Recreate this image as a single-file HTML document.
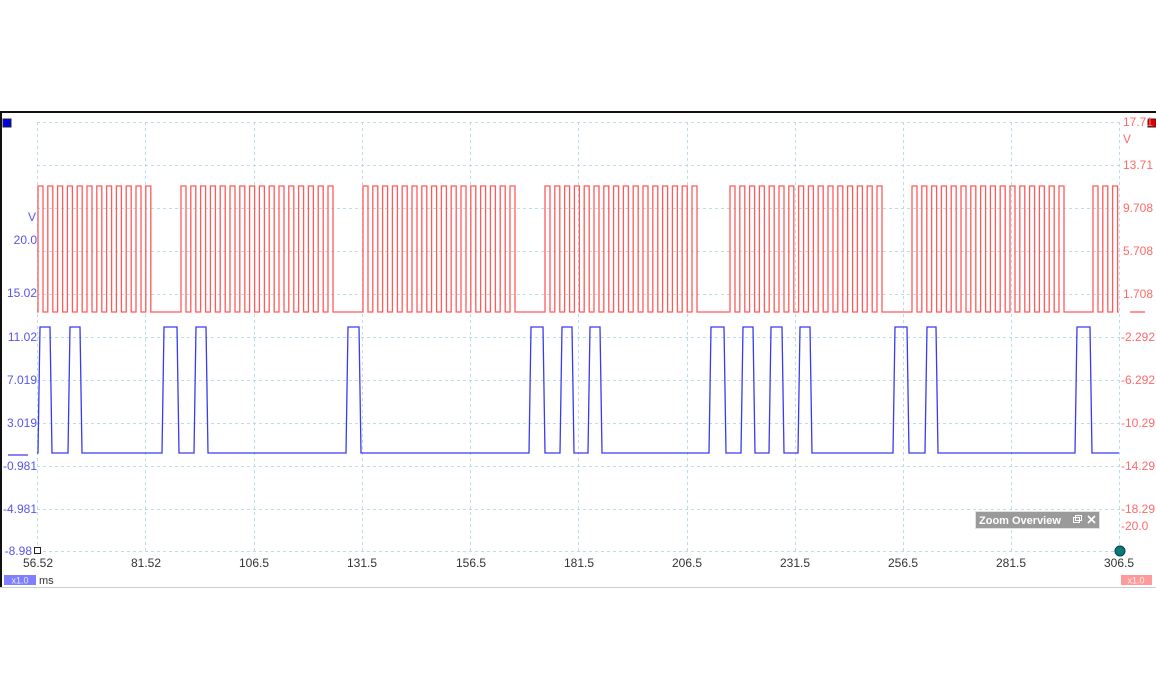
<!DOCTYPE html>
<html><head><style>
body{margin:0;width:1156px;height:700px;background:#fff;overflow:hidden;font-family:"Liberation Sans",sans-serif}
svg{position:absolute;left:0;top:0}
</style></head><body>
<svg width="1156" height="700" xmlns="http://www.w3.org/2000/svg" font-family="Liberation Sans, sans-serif">
<rect x="0" y="0" width="1156" height="700" fill="#fff"/>
<line x1="0" y1="112" x2="1156" y2="112" stroke="#111" stroke-width="2"/>
<line x1="1" y1="111" x2="1" y2="588" stroke="#111" stroke-width="2"/>
<line x1="0" y1="587.5" x2="1156" y2="587.5" stroke="#ccc"/>
<g stroke="#bcdde8" stroke-width="1" stroke-dasharray="3,3">
<line x1="37.5" y1="122" x2="37.5" y2="551"/><line x1="145.5" y1="122" x2="145.5" y2="551"/>
<line x1="254.5" y1="122" x2="254.5" y2="551"/><line x1="362.5" y1="122" x2="362.5" y2="551"/>
<line x1="470.5" y1="122" x2="470.5" y2="551"/><line x1="578.5" y1="122" x2="578.5" y2="551"/>
<line x1="687.5" y1="122" x2="687.5" y2="551"/><line x1="795.5" y1="122" x2="795.5" y2="551"/>
<line x1="903.5" y1="122" x2="903.5" y2="551"/><line x1="1011.5" y1="122" x2="1011.5" y2="551"/>
<line x1="1119.5" y1="122" x2="1119.5" y2="551"/>
<line x1="37" y1="122.5" x2="1120" y2="122.5"/><line x1="37" y1="165.5" x2="1120" y2="165.5"/>
<line x1="37" y1="208.5" x2="1120" y2="208.5"/><line x1="37" y1="251.5" x2="1120" y2="251.5"/>
<line x1="37" y1="294.5" x2="1120" y2="294.5"/><line x1="37" y1="337.5" x2="1120" y2="337.5"/>
<line x1="37" y1="380.5" x2="1120" y2="380.5"/><line x1="37" y1="423.5" x2="1120" y2="423.5"/>
<line x1="37" y1="466.5" x2="1120" y2="466.5"/><line x1="37" y1="509.5" x2="1120" y2="509.5"/>
<line x1="37" y1="551.5" x2="1120" y2="551.5"/>
</g>
<path fill="none" stroke="#ff5a5a" stroke-width="1.3" d="M37 312H38
v-126h5v126h4.8v-126h5v126h4.8v-126h5v126h4.8v-126h5v126h4.8v-126h5v126h4.8v-126h5v126h4.8v-126h5v126h4.8v-126h5v126h4.8v-126h5v126h4.8v-126h5v126h4.8v-126h5v126h4.8v-126h5v126
H181 v-126h5v126h4.8v-126h5v126h4.8v-126h5v126h4.8v-126h5v126h4.8v-126h5v126h4.8v-126h5v126h4.8v-126h5v126h4.8v-126h5v126h4.8v-126h5v126h4.8v-126h5v126h4.8v-126h5v126h4.8v-126h5v126h4.8v-126h5v126h4.8v-126h5v126h4.8v-126h5v126h4.8v-126h5v126
H363 v-126h5v126h4.8v-126h5v126h4.8v-126h5v126h4.8v-126h5v126h4.8v-126h5v126h4.8v-126h5v126h4.8v-126h5v126h4.8v-126h5v126h4.8v-126h5v126h4.8v-126h5v126h4.8v-126h5v126h4.8v-126h5v126h4.8v-126h5v126h4.8v-126h5v126h4.8v-126h5v126h4.8v-126h5v126
H545 v-126h5v126h4.8v-126h5v126h4.8v-126h5v126h4.8v-126h5v126h4.8v-126h5v126h4.8v-126h5v126h4.8v-126h5v126h4.8v-126h5v126h4.8v-126h5v126h4.8v-126h5v126h4.8v-126h5v126h4.8v-126h5v126h4.8v-126h5v126h4.8v-126h5v126h4.8v-126h5v126h4.8v-126h5v126
H730 v-126h5v126h4.8v-126h5v126h4.8v-126h5v126h4.8v-126h5v126h4.8v-126h5v126h4.8v-126h5v126h4.8v-126h5v126h4.8v-126h5v126h4.8v-126h5v126h4.8v-126h5v126h4.8v-126h5v126h4.8v-126h5v126h4.8v-126h5v126h4.8v-126h5v126h4.8v-126h5v126h4.8v-126h5v126
H912 v-126h5v126h4.8v-126h5v126h4.8v-126h5v126h4.8v-126h5v126h4.8v-126h5v126h4.8v-126h5v126h4.8v-126h5v126h4.8v-126h5v126h4.8v-126h5v126h4.8v-126h5v126h4.8v-126h5v126h4.8v-126h5v126h4.8v-126h5v126h4.8v-126h5v126h4.8v-126h5v126h4.8v-126h5v126
H1093 v-126h5v126h4.8v-126h5v126h4.8v-126h5v126H1119"/>
<line x1="1130" y1="312" x2="1145" y2="312" stroke="#ff5a5a" stroke-width="1.3"/>
<path fill="none" stroke="#3a3af0" stroke-width="1.3" d="M37 453H38L40 327H50L52 453H68L70 327H80L82 453H162L164 327H177L179 453H194L196 327H206L208 453H346L348 327H359L361 453H529L531 327H543L545 453H560L562 327H572L574 453H588L590 327H600L602 453H709L711 327H724L726 453H741L743 327H753L755 453H769L771 327H782L784 453H798L800 327H810L812 453H893L895 327H907L909 453H925L927 327H936L938 453H1075L1077 327H1090L1092 453H1119"/>
<line x1="8" y1="455" x2="28" y2="455" stroke="#3a3af0" stroke-width="1.3"/>
<rect x="3" y="119" width="8" height="8" fill="#0000e0" stroke="#223"/>
<rect x="1148" y="119" width="8" height="8" fill="#e00000" stroke="#322"/>
<rect x="34.5" y="547.5" width="6" height="6" fill="#fff" stroke="#222"/>
<circle cx="1120" cy="551" r="5" fill="#0a7a78" stroke="#044"/>
<g fill="#5555ee" font-size="12" text-anchor="end">
<text x="36" y="221">V</text><text x="37" y="244">20.0</text><text x="37" y="297">15.02</text>
<text x="37" y="341">11.02</text><text x="37" y="384">7.019</text><text x="37" y="427">3.019</text>
<text x="37" y="470">-0.981</text><text x="37" y="513">-4.981</text><text x="32" y="555">-8.98</text>
</g>
<g fill="#ff6a6a" font-size="12">
<text x="1123" y="126">17.71</text><text x="1123" y="143">V</text><text x="1123" y="169">13.71</text>
<text x="1123" y="212">9.708</text><text x="1123" y="255">5.708</text><text x="1123" y="298">1.708</text>
<text x="1121" y="341">-2.292</text><text x="1121" y="384">-6.292</text><text x="1121" y="427">-10.29</text>
<text x="1121" y="470">-14.29</text><text x="1121" y="513">-18.29</text><text x="1121" y="530">-20.0</text>
</g>
<g fill="#333" font-size="12" text-anchor="middle">
<text x="38" y="567">56.52</text><text x="146" y="567">81.52</text><text x="254" y="567">106.5</text>
<text x="362" y="567">131.5</text><text x="471" y="567">156.5</text><text x="579" y="567">181.5</text>
<text x="687" y="567">206.5</text><text x="795" y="567">231.5</text><text x="903" y="567">256.5</text>
<text x="1011" y="567">281.5</text><text x="1119" y="567">306.5</text>
</g>
<rect x="4" y="575" width="32" height="10" fill="#8080ff"/>
<text x="20" y="583.5" fill="#e8e8ff" font-size="9" text-anchor="middle">x1.0</text>
<text x="39" y="584" fill="#333" font-size="11">ms</text>
<rect x="1121" y="575" width="31" height="10" fill="#ff9a9a"/>
<text x="1136" y="583.5" fill="#fff0f0" font-size="9" text-anchor="middle">x1.0</text>
<rect x="975.5" y="511.5" width="124" height="17" fill="#9a9a9a" stroke="#e0e0e0"/>
<text x="979" y="524" fill="#fff" font-size="11" font-weight="bold">Zoom Overview</text>
<rect x="1073.5" y="517.5" width="6" height="5" fill="none" stroke="#fff"/>
<rect x="1075.5" y="515.5" width="6" height="5" fill="none" stroke="#fff"/>
<path d="M1088 516L1095 523M1095 516L1088 523" stroke="#fff" stroke-width="1.6"/>
</svg>
</body></html>
